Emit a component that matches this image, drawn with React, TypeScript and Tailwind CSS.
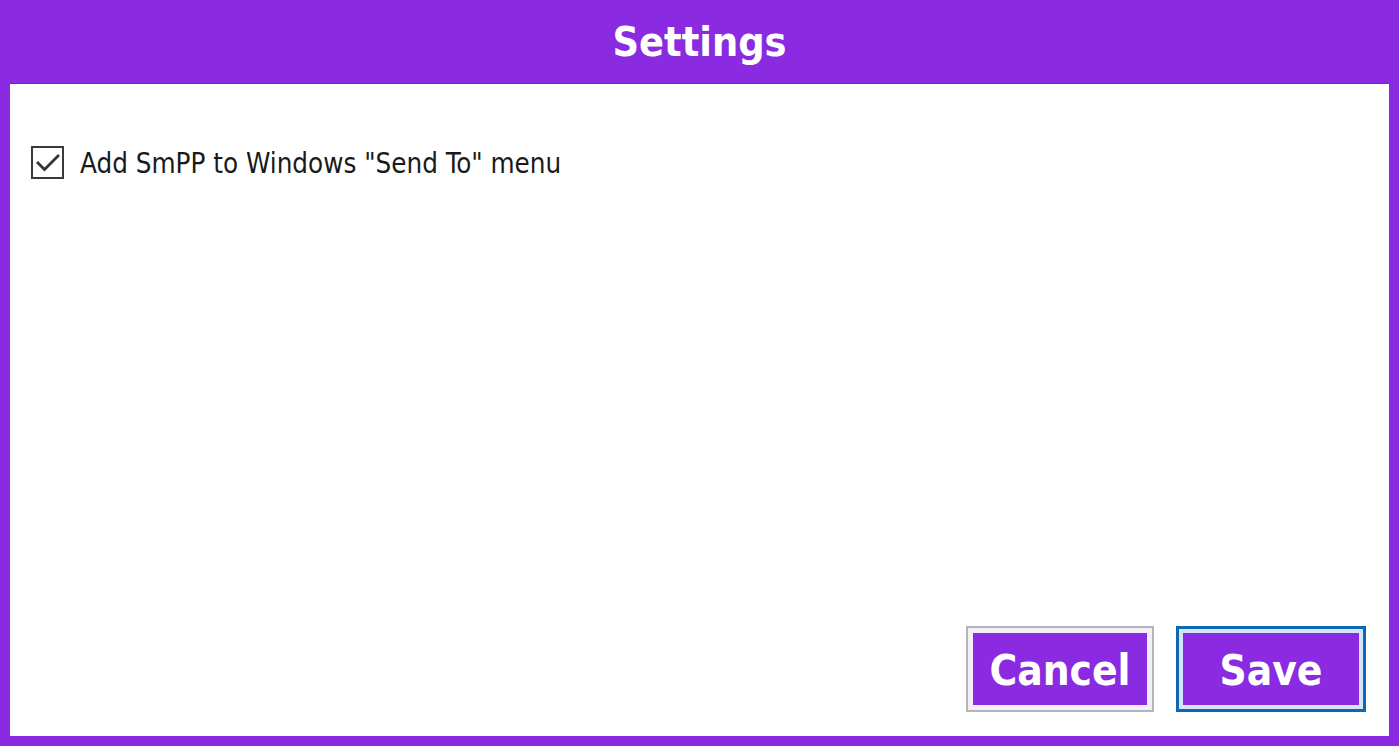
import { useState } from "react";

const uiFont = { fontFamily: '"DejaVu Sans Condensed", "DejaVu Sans", "Open Sans", sans-serif' };

export default function App() {
  const [sendTo, setSendTo] = useState(true);

  return (
    <div className="w-full h-[746px] bg-[#8a2be2] flex flex-col" style={uiFont}>
      {/* Title bar */}
      <div className="h-[83px] shrink-0 flex items-center justify-center">
        <h1 className="text-[41px] font-bold text-white leading-none mt-[1px]">Settings</h1>
      </div>

      {/* Body */}
      <div className="flex-1 mx-[10px] mb-[10px] bg-white flex flex-col border-t border-[#7a22cc]">
        <label
          className="flex items-center gap-[16px] pl-[21px] pt-[62px] cursor-pointer select-none"
          onClick={() => setSendTo(!sendTo)}
        >
          <span className="w-[33px] h-[33px] border-2 border-[#3a3a3a] bg-white flex items-center justify-center">
            {sendTo && (
              <svg width="24" height="20" viewBox="0 0 24 20" fill="none">
                <path d="M2 10 L8.5 16.5 L22 3" stroke="#333" strokeWidth="2.8" strokeLinecap="square" />
              </svg>
            )}
          </span>
          <span className="text-[27.5px] text-[#1a1a1a] leading-none mt-[3px]">Add SmPP to Windows "Send To" menu</span>
        </label>

        <div className="flex-1" />

        {/* Buttons */}
        <div className="flex justify-end gap-[22px] pr-[23px] pb-[24px]">
          <button className="w-[188px] h-[86px] border-2 border-[#b4b4b4] bg-[#f4eefa] p-[5px]">
            <span className="w-full h-full bg-[#8a2be2] flex items-center justify-center text-white font-bold text-[42px] leading-none pt-[3px]">
              Cancel
            </span>
          </button>
          <button className="w-[190px] h-[86px] border-[3px] border-[#0c68b2] bg-[#d2e6f7] p-[4px]">
            <span className="w-full h-full bg-[#8a2be2] flex items-center justify-center text-white font-bold text-[42px] leading-none pt-[3px]">
              Save
            </span>
          </button>
        </div>
      </div>
    </div>
  );
}
